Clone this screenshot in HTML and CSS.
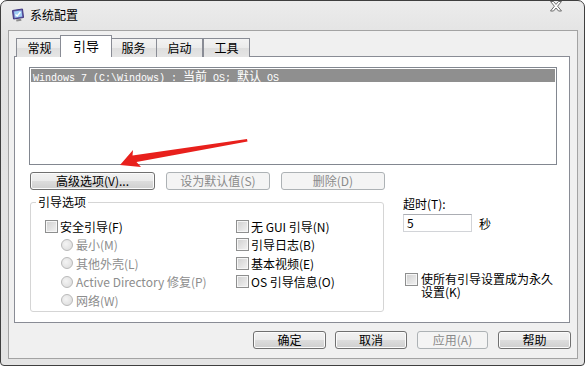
FILE: index.html
```html
<!DOCTYPE html>
<html lang="zh-CN">
<head>
  <meta charset="UTF-8">
  <title>系统配置</title>
  <link rel="stylesheet" href="styles.css">
</head>
<body>
  <div class="window">
    <div class="titlebar">
      <svg class="app-icon" width="14" height="14" viewBox="0 0 14 14">
        <path d="M1.5 2.5 L11.5 1 L12.5 9.5 L2.5 11 Z" fill="#6a5fb0" stroke="#3d3680" stroke-width="1"/>
        <path d="M3 3.5 L10.5 2.4 L11.2 8.6 L3.8 9.7 Z" fill="#9fd0f5"/>
        <path d="M4.5 6.5 L6.2 8 L9.5 4" fill="none" stroke="#ffffff" stroke-width="1.3"/>
        <path d="M5 11.5 L10 10.8 L10.5 12.8 L5.5 13.5 Z" fill="#8c8c8c"/>
      </svg>
      <span class="title">系统配置</span>
      <svg class="close" width="12" height="11" viewBox="0 0 12 11">
        <polygon points="0.5,0.5 3.5,0.5 6,3.4 8.5,0.5 11.5,0.5 7.6,5.2 11.5,10 8.5,10 6,7 3.5,10 0.5,10 4.4,5.2" fill="#ffffff" stroke="#6b6b6b" stroke-width="1"/>
      </svg>
    </div>

    <div class="client">
      <div class="tabs">
        <div class="tab">常规</div>
        <div class="tab active">引导</div>
        <div class="tab">服务</div>
        <div class="tab">启动</div>
        <div class="tab">工具</div>
      </div>

      <div class="panel">
        <div class="listbox">
          <div class="row selected">Windows 7 (C:\Windows) : <span class="cjk">当前</span> OS; <span class="cjk">默认</span> OS</div>
        </div>

        <div class="btn-row">
          <button class="btn btn-adv">高级选项(V)...</button>
          <button class="btn btn-mid" disabled>设为默认值(S)</button>
          <button class="btn btn-mid" disabled>删除(D)</button>
        </div>

        <div class="options">
          <fieldset class="group">
            <legend>引导选项</legend>
            <div class="opt-cols">
              <div class="opt-col left">
                <div class="opt"><span class="check"></span>安全引导(F)</div>
                <div class="opt sub off"><span class="radio"></span>最小(M)</div>
                <div class="opt sub off"><span class="radio"></span>其他外壳(L)</div>
                <div class="opt sub off"><span class="radio"></span>Active Directory 修复(P)</div>
                <div class="opt sub off"><span class="radio"></span>网络(W)</div>
              </div>
              <div class="opt-col">
                <div class="opt"><span class="check"></span>无 GUI 引导(N)</div>
                <div class="opt"><span class="check"></span>引导日志(B)</div>
                <div class="opt"><span class="check"></span>基本视频(E)</div>
                <div class="opt"><span class="check"></span>OS 引导信息(O)</div>
              </div>
            </div>
          </fieldset>

          <div class="side">
            <div class="timeout-label">超时(T):</div>
            <div class="timeout-row">
              <div class="input">5</div>
              <span class="unit">秒</span>
            </div>
            <div class="perm">
              <span class="check"></span>
              <span class="perm-text">使所有引导设置成为永久设置(K)</span>
            </div>
          </div>
        </div>
      </div>

      <div class="footer">
        <button class="btn btn-ok">确定</button>
        <button class="btn btn-cancel">取消</button>
        <button class="btn btn-apply" disabled>应用(A)</button>
        <button class="btn btn-help">帮助</button>
      </div>
    </div>
  </div>

  <svg class="arrow" width="585" height="366" viewBox="0 0 585 366">
    <polygon points="120,165 133,150 132.5,155.5 247,139 247.5,141.5 136.5,162 141,167" fill="#e8201c"/>
  </svg>
</body>
</html>
```

FILE: styles.css
```css
body {
  margin: 0;
  width: 585px;
  height: 366px;
  overflow: hidden;
  background: #ffffff;
  font-family: "Noto Sans CJK SC", "DejaVu Sans", sans-serif;
  font-size: 12px;
  color: #000;
  position: relative;
}
.window {
  box-sizing: border-box;
  width: 585px;
  height: 366px;
  border: 1px solid #3f3f3f;
  border-radius: 7px 7px 4px 4px;
  background: linear-gradient(#ececec, #e2e2e2 40px, #e4e4e4);
  padding: 0 6px 6px 7px;
  display: flex;
  flex-direction: column;
}
.titlebar {
  height: 29px;
  display: flex;
  align-items: center;
  padding-left: 3px;
  flex-shrink: 0;
}
.app-icon {
  margin-top: -2px;
}
.title {
  margin-left: 5px;
  line-height: 14px;
  margin-top: -2px;
}
.close {
  margin-left: auto;
  margin-right: 16px;
  margin-top: -18px;
}
.client {
  flex: 1;
  border: 1px solid #a3a3a3;
  background: #f0f0f0;
  display: flex;
  flex-direction: column;
}

/* tabs */
.tabs {
  display: flex;
  align-items: flex-end;
  margin-top: 5px;
  padding-left: 7px;
  height: 21px;
  position: relative;
  z-index: 1;
}
.tab {
  box-sizing: border-box;
  width: 47px;
  height: 19px;
  border: 1px solid #898c95;
  border-bottom: none;
  background: linear-gradient(#f3f3f3, #ebebeb 50%, #dedede 51%, #e5e5e5);
  text-align: center;
  line-height: 18px;
  margin-right: -1px;
}
.tab:first-child {
  width: 47px;
}
.tab.active {
  width: 52px;
  height: 22px;
  margin: 0 -2px 0 -2px;
  background: #ffffff;
  line-height: 19px;
  position: relative;
  z-index: 2;
  font-size: 13px;
}
.tab:last-child {
  margin-left: 1px;
}

/* panel */
.panel {
  box-sizing: border-box;
  margin: 0 7px 0 5px;
  height: 267px;
  border: 1px solid #898c95;
  background: #ffffff;
  margin-top: -1px;
}
.listbox {
  box-sizing: border-box;
  width: 528px;
  height: 98px;
  margin: 10px 0 0 14px;
  border: 1px solid #828790;
  padding: 1px;
}
.row {
  height: 13px;
  line-height: 13px;
  padding-left: 2px;
  font-family: "Liberation Mono", "Noto Sans CJK SC", monospace;
  font-size: 10px;
  white-space: pre;
}
.row .cjk {
  font-family: "Noto Sans CJK SC", sans-serif;
  font-size: 12px;
}
.row.selected {
  background: #8f8f8f;
  color: #ffffff;
}

/* buttons */
.btn {
  box-sizing: border-box;
  height: 18px;
  padding: 0;
  font-family: inherit;
  font-size: 12px;
  line-height: 16px;
  color: #000;
  border: 1px solid #707070;
  border-radius: 3px;
  background: linear-gradient(#f2f2f2, #ebebeb 50%, #dddddd 51%, #cfcfcf);
  box-shadow: inset 0 0 0 1px #fbfbfb;
}
.btn:disabled {
  color: #8a8a8a;
  border-color: #adb2b5;
  background: #f4f4f4;
  box-shadow: none;
}
.btn-row {
  display: flex;
  gap: 11px;
  margin-top: 7px;
  padding-left: 15px;
}
.btn-adv {
  width: 125px;
}
.btn-mid {
  width: 104px;
}

/* group */
.options {
  display: flex;
  margin-top: 4px;
  padding-left: 15px;
}
.group {
  box-sizing: border-box;
  width: 354px;
  height: 118px;
  margin: 0;
  padding: 0;
  border: 1px solid #d5d5d5;
  border-radius: 3px;
}
.group legend {
  margin-left: 5px;
  padding: 0 2px;
  line-height: 16px;
}
.opt-cols {
  display: flex;
  padding: 7px 0 0 14px;
}
.opt-col.left {
  width: 191px;
}
.opt {
  height: 18.5px;
  display: flex;
  align-items: center;
  white-space: nowrap;
}
.opt.sub {
  padding-left: 16px;
}
.opt.off {
  color: #8d8d8d;
}
.check {
  box-sizing: border-box;
  width: 13px;
  height: 13px;
  border: 1px solid #8e8f8f;
  background: linear-gradient(135deg, #cfcfcf, #f3f3f3);
  box-shadow: inset 0 0 0 1px #f6f6f6;
  margin-right: 2px;
  flex-shrink: 0;
}
.radio {
  box-sizing: border-box;
  width: 12px;
  height: 12px;
  border-radius: 50%;
  border: 1px solid #b9b9b9;
  background: radial-gradient(circle at 40% 40%, #f4f4f4, #d9d9d9);
  margin-right: 3px;
  flex-shrink: 0;
}

/* right side */
.side {
  margin-left: 19px;
}
.timeout-label {
  margin-top: 2px;
  line-height: 16px;
}
.timeout-row {
  display: flex;
  align-items: center;
  margin-top: 2px;
}
.input {
  box-sizing: border-box;
  width: 69px;
  height: 18px;
  border: 1px solid #d2d4d8;
  border-top-color: #abadb3;
  padding-left: 3px;
  line-height: 16px;
  background: #fff;
}
.unit {
  margin-left: 7px;
}
.perm {
  display: flex;
  align-items: flex-start;
  margin-top: 40px;
  padding-left: 2px;
}
.perm .check {
  margin-top: 1px;
  margin-right: 3px;
}
.perm-text {
  width: 136px;
  line-height: 13px;
}

/* footer */
.footer {
  display: flex;
  justify-content: flex-end;
  gap: 9px;
  margin-top: 8px;
  padding-right: 6px;
}
.btn-ok {
  width: 73px;
}
.btn-cancel {
  width: 72px;
}
.btn-apply {
  width: 71px;
  margin-left: 1px;
}
.btn-help {
  width: 73px;
  margin-left: 1px;
}

.arrow {
  position: absolute;
  top: 0;
  left: 0;
  pointer-events: none;
}
```
